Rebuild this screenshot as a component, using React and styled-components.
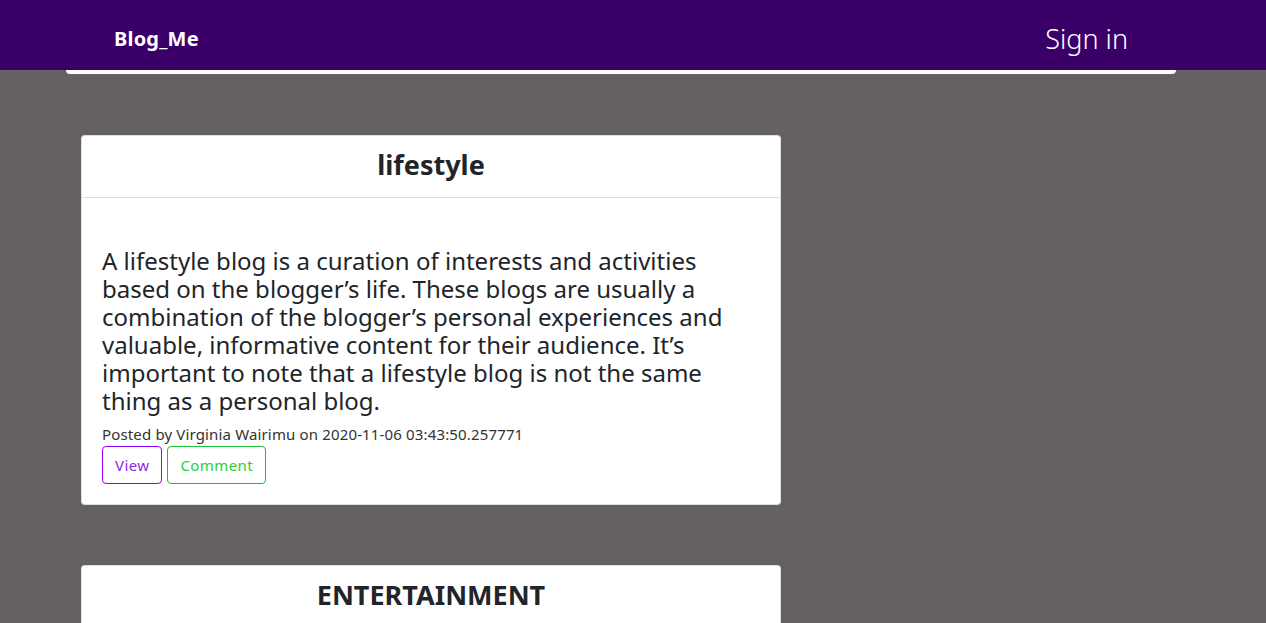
import React from "react";
import styled, { createGlobalStyle } from "styled-components";

const Global = createGlobalStyle`
  html { overflow-y: scroll; }
  html::-webkit-scrollbar { width: 3px; }
  html::-webkit-scrollbar-track { background: #f1f1f1; }
  html::-webkit-scrollbar-thumb { background: #c1c1c1; }
  body {
    margin: 0;
    background: #656061;
    font-family: "Noto Sans", "Liberation Sans", sans-serif;
    color: #212529;
  }
`;

const Nav = styled.nav`
  height: 70px;
  background: #3a0068;
  display: flex;
  align-items: center;
  justify-content: space-between;
  padding: 6px 138px 0 114px;
  box-sizing: border-box;
`;

const Brand = styled.a`
  color: #fff;
  font-size: 20px;
  font-weight: 700;
  letter-spacing: 0.2px;
  text-decoration: none;
`;

const SignIn = styled.a`
  color: #fff;
  font-size: 27px;
  font-weight: 300;
  text-decoration: none;
`;

const Container = styled.div`
  width: 1110px;
  margin-left: 66px;
`;

const Strip = styled.div`
  height: 4px;
  background: #fff;
  border-radius: 0 0 4px 4px;
`;

const Feed = styled.div`
  display: flex;
  flex-direction: column;
  gap: 60px;
  padding: 61px 0 0 15px;
`;

const Card = styled.article`
  width: 700px;
  box-sizing: border-box;
  background: #fff;
  border: 1px solid rgba(0, 0, 0, 0.125);
  border-radius: 4px;
`;

const CardHeader = styled.header`
  height: 62px;
  padding-bottom: 5px;
  box-sizing: border-box;
  display: flex;
  align-items: center;
  justify-content: center;
  border-bottom: 1px solid #dfdfdf;
`;

const Title = styled.h2`
  margin: 0;
  font-size: 27px;
  font-weight: 700;
  color: #212529;
`;

const CardBody = styled.div`
  padding: 49px 20px 20px;
`;

const Content = styled.p`
  margin: 0;
  font-size: 24px;
  line-height: 28px;
  color: #212529;
`;

const Meta = styled.p`
  margin: 7px 0 0;
  font-size: 15px;
  line-height: 24px;
  letter-spacing: 0.15px;
  color: #333;
`;

const Actions = styled.div`
  display: flex;
  gap: 5px;
`;

const Button = styled.button`
  height: 38px;
  padding: 0 12px;
  background: #fff;
  border: 1px solid ${(p) => p.$border};
  color: ${(p) => p.$color};
  border-radius: 4px;
  font-family: inherit;
  font-size: 15px;
  letter-spacing: 0.4px;
`;

const posts = [
  {
    title: "lifestyle",
    body:
      "A lifestyle blog is a curation of interests and activities based on the blogger\u2019s life. These blogs are usually a combination of the blogger\u2019s personal experiences and valuable, informative content for their audience. It\u2019s important to note that a lifestyle blog is not the same thing as a personal blog.",
    meta: "Posted by Virginia Wairimu on 2020-11-06 03:43:50.257771",
  },
  {
    title: "ENTERTAINMENT",
    body:
      "Entertainment blogs cover movies, music, television, celebrities and everything in between.",
    meta: "Posted by Virginia Wairimu on 2020-11-06 03:45:12.104532",
  },
];

export default function App() {
  return (
    <>
      <Global />
      <Nav>
        <Brand href="#">Blog_Me</Brand>
        <SignIn href="#">Sign in</SignIn>
      </Nav>
      <Container>
        <Strip />
        <Feed>
          {posts.map((p) => (
            <Card key={p.title}>
              <CardHeader>
                <Title>{p.title}</Title>
              </CardHeader>
              <CardBody>
                <Content>{p.body}</Content>
                <Meta>{p.meta}</Meta>
                <Actions>
                  <Button $border="#8f00ff" $color="#8a2be2">View</Button>
                  <Button $border="#1fbf3a" $color="#2ecc40">Comment</Button>
                </Actions>
              </CardBody>
            </Card>
          ))}
        </Feed>
      </Container>
    </>
  );
}
